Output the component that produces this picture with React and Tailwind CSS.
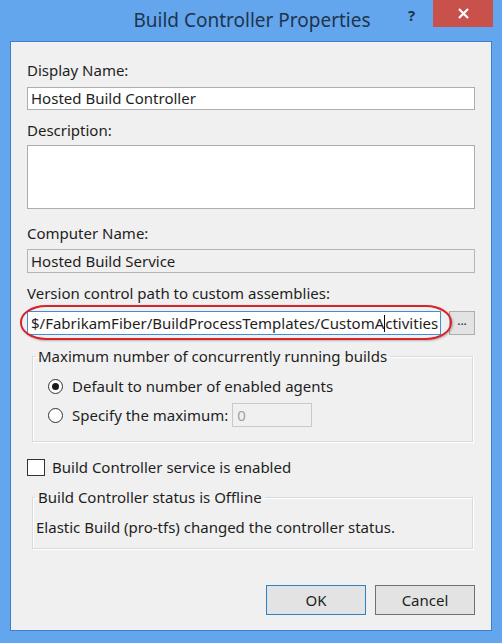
import React from "react";

const font = { fontFamily: '"Noto Sans", "Open Sans", sans-serif' };

function Radio({ checked }) {
  return (
    <span className="flex h-[15px] w-[15px] items-center justify-center rounded-full border border-[#333] bg-white">
      {checked && <span className="h-[7px] w-[7px] rounded-full bg-[#1a1a1a]" />}
    </span>
  );
}

export default function App() {
  return (
    <div
      className="flex h-[643px] w-[502px] flex-col bg-[#63a6ee] text-[15px] text-[#1e1e1e]"
      style={font}
    >
      {/* title bar */}
      <div className="relative flex h-[41px] shrink-0 items-center justify-center">
        <span className="ml-[2px] text-[19px] text-[#1f344d]">Build Controller Properties</span>
        <span className="absolute left-[408px] top-[4px] text-[15px] font-bold text-[#1f344d]">?</span>
        <div className="absolute right-[9px] top-0 flex h-[27px] w-[60px] items-center justify-center bg-[#c9514c]">
          <svg width="11" height="11" viewBox="0 0 11 11">
            <path d="M1 1L10 10M10 1L1 10" stroke="white" strokeWidth="2.2" />
          </svg>
        </div>
      </div>

      {/* client area */}
      <div className="relative mx-[10px] mb-[12px] flex flex-1 flex-col border border-[#3d80cc] bg-[#f0f0f0] px-[16px] pt-[18px]">
        <div className="h-5 leading-5">Display Name:</div>
        <div className="mt-[7px] flex h-[23px] items-center border border-[#adadad] bg-white px-[3px]">
          Hosted Build Controller
        </div>

        <div className="mt-[10px] h-5 leading-5">Description:</div>
        <div className="mt-[5px] h-[64px] border border-[#adadad] bg-white" />

        <div className="mt-[14px] h-5 leading-5">Computer Name:</div>
        <div className="mt-[6px] flex h-[24px] items-center border border-[#b5b5b5] bg-[#f0f0f0] px-[3px]">
          Hosted Build Service
        </div>

        <div className="mt-[10px] h-5 leading-5">Version control path to custom assemblies:</div>
        <div className="relative mt-[8px] flex h-[24px] gap-[8px]">
          <div className="flex flex-1 items-center overflow-hidden whitespace-nowrap border border-[#3f8fd6] bg-white px-[3px]">
            <span>$/FabrikamFiber/BuildProcessTemplates/CustomA</span>
            <span className="h-[17px] border-l border-black" />
            <span>ctivities</span>
          </div>
          <div className="flex w-[26px] items-center justify-center border border-[#adadad] bg-[#e3e3e3] pb-[4px] text-[12px]">
            ...
          </div>
          <div className="absolute -left-[7px] -top-[6px] h-[35px] w-[432px] rounded-[26px/17px] border-2 border-[#d8232a] shadow-[1px_1px_2px_rgba(0,0,0,0.25)]" />
        </div>

        {/* group 1 */}
        <fieldset className="ml-[5px] mr-[2px] mt-[11px] h-[96px] border border-[#d6dbe0] px-[15px] shadow-[inset_1px_1px_0_white,1px_1px_0_white]">
          <legend className="ml-[-13px] px-[3px] leading-5">Maximum number of concurrently running builds</legend>
          <div className="mt-[9px] flex h-[22px] items-center gap-[9px]">
            <Radio checked />
            <span>Default to number of enabled agents</span>
          </div>
          <div className="mt-[6px] flex h-[24px] items-center">
            <Radio />
            <span className="ml-[9px]">Specify the maximum:</span>
            <span className="ml-[4px] flex h-[24px] w-[80px] items-center border border-[#c8c8c8] bg-[#f0f0f0] px-[4px] text-[#a0a0a0]">
              0
            </span>
          </div>
        </fieldset>

        <div className="mt-[16px] flex h-[18px] items-center gap-[7px]">
          <span className="h-[17px] w-[18px] border border-[#333] bg-white" />
          <span>Build Controller service is enabled</span>
        </div>

        {/* group 2 */}
        <fieldset className="ml-[5px] mr-[2px] mt-[11px] h-[62px] border border-[#d6dbe0] px-[3px] shadow-[inset_1px_1px_0_white,1px_1px_0_white]">
          <legend className="ml-[-1px] px-[3px] leading-5">Build Controller status is Offline</legend>
          <div className="mt-[10px] leading-5">Elastic Build (pro-tfs) changed the controller status.</div>
        </fieldset>

        <div className="mt-auto mb-[15px] flex justify-end gap-[9px]">
          <div className="flex h-[30px] w-[100px] items-center justify-center border border-[#3c7fb1] bg-[#e3e3e3] shadow-[inset_0_0_0_1px_#cfe4f7]">
            OK
          </div>
          <div className="flex h-[30px] w-[100px] items-center justify-center border border-[#707070] bg-[#e3e3e3]">
            Cancel
          </div>
        </div>
      </div>
    </div>
  );
}
